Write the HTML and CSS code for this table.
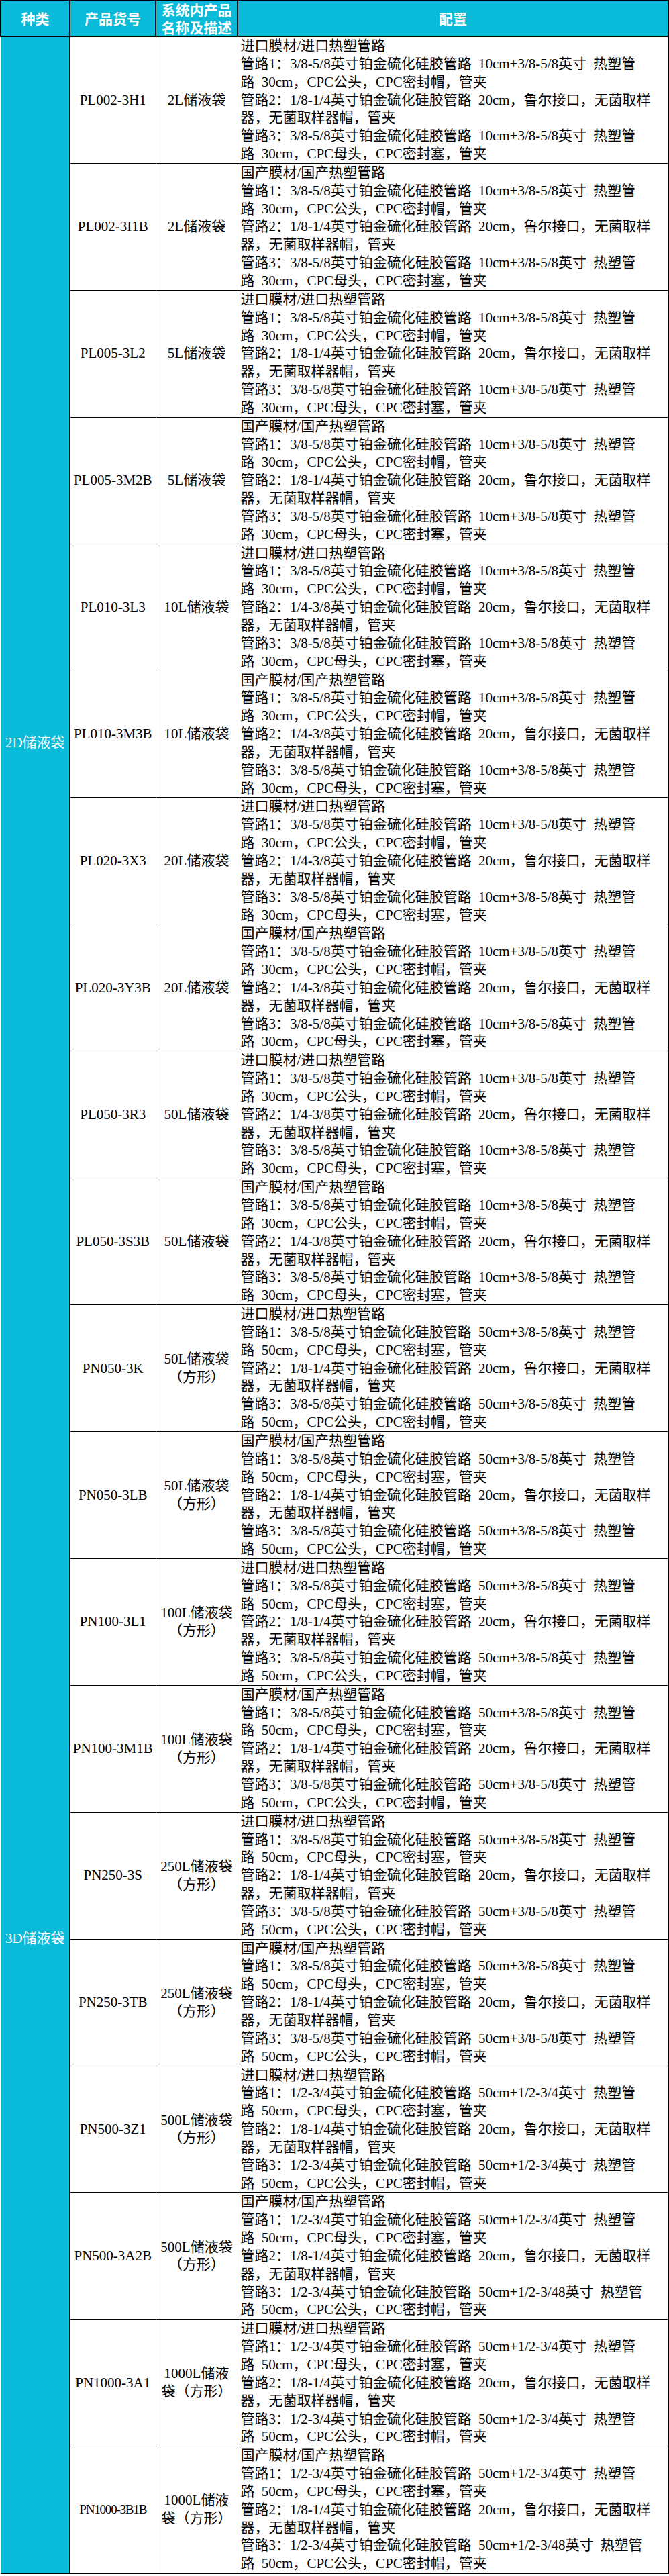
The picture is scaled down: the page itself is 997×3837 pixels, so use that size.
FILE: index.html
```html
<!DOCTYPE html>
<html lang="zh-CN">
<head>
<meta charset="utf-8">
<title>储液袋配置</title>
<link rel="stylesheet" href="styles.css">
</head>
<body>
<table class="grid">
<colgroup><col class="c1"><col class="c2"><col class="c3"><col class="c4"></colgroup>
<thead>
<tr><th>种类</th><th>产品货号</th><th>系统内产品<br>名称及描述</th><th>配置</th></tr>
</thead>
<tbody>
<tr>
<td class="cat cat-2d" rowspan="10">2D储液袋</td>
<td class="code">PL002-3H1</td><td class="name">2L储液袋</td>
<td class="cfg">进口膜材/进口热塑管路<br>管路1：3/8-5/8英寸铂金硫化硅胶管路 10cm+3/8-5/8英寸 热塑管<br>路 30cm，CPC公头，CPC密封帽，管夹<br>管路2：1/8-1/4英寸铂金硫化硅胶管路 20cm，鲁尔接口，无菌取样<br>器，无菌取样器帽，管夹<br>管路3：3/8-5/8英寸铂金硫化硅胶管路 10cm+3/8-5/8英寸 热塑管<br>路 30cm，CPC母头，CPC密封塞，管夹</td>
</tr>
<tr>
<td class="code">PL002-3I1B</td><td class="name">2L储液袋</td>
<td class="cfg">国产膜材/国产热塑管路<br>管路1：3/8-5/8英寸铂金硫化硅胶管路 10cm+3/8-5/8英寸 热塑管<br>路 30cm，CPC公头，CPC密封帽，管夹<br>管路2：1/8-1/4英寸铂金硫化硅胶管路 20cm，鲁尔接口，无菌取样<br>器，无菌取样器帽，管夹<br>管路3：3/8-5/8英寸铂金硫化硅胶管路 10cm+3/8-5/8英寸 热塑管<br>路 30cm，CPC母头，CPC密封塞，管夹</td>
</tr>
<tr>
<td class="code">PL005-3L2</td><td class="name">5L储液袋</td>
<td class="cfg">进口膜材/进口热塑管路<br>管路1：3/8-5/8英寸铂金硫化硅胶管路 10cm+3/8-5/8英寸 热塑管<br>路 30cm，CPC公头，CPC密封帽，管夹<br>管路2：1/8-1/4英寸铂金硫化硅胶管路 20cm，鲁尔接口，无菌取样<br>器，无菌取样器帽，管夹<br>管路3：3/8-5/8英寸铂金硫化硅胶管路 10cm+3/8-5/8英寸 热塑管<br>路 30cm，CPC母头，CPC密封塞，管夹</td>
</tr>
<tr>
<td class="code">PL005-3M2B</td><td class="name">5L储液袋</td>
<td class="cfg">国产膜材/国产热塑管路<br>管路1：3/8-5/8英寸铂金硫化硅胶管路 10cm+3/8-5/8英寸 热塑管<br>路 30cm，CPC公头，CPC密封帽，管夹<br>管路2：1/8-1/4英寸铂金硫化硅胶管路 20cm，鲁尔接口，无菌取样<br>器，无菌取样器帽，管夹<br>管路3：3/8-5/8英寸铂金硫化硅胶管路 10cm+3/8-5/8英寸 热塑管<br>路 30cm，CPC母头，CPC密封塞，管夹</td>
</tr>
<tr>
<td class="code">PL010-3L3</td><td class="name">10L储液袋</td>
<td class="cfg">进口膜材/进口热塑管路<br>管路1：3/8-5/8英寸铂金硫化硅胶管路 10cm+3/8-5/8英寸 热塑管<br>路 30cm，CPC公头，CPC密封帽，管夹<br>管路2：1/4-3/8英寸铂金硫化硅胶管路 20cm，鲁尔接口，无菌取样<br>器，无菌取样器帽，管夹<br>管路3：3/8-5/8英寸铂金硫化硅胶管路 10cm+3/8-5/8英寸 热塑管<br>路 30cm，CPC母头，CPC密封塞，管夹</td>
</tr>
<tr>
<td class="code">PL010-3M3B</td><td class="name">10L储液袋</td>
<td class="cfg">国产膜材/国产热塑管路<br>管路1：3/8-5/8英寸铂金硫化硅胶管路 10cm+3/8-5/8英寸 热塑管<br>路 30cm，CPC公头，CPC密封帽，管夹<br>管路2：1/4-3/8英寸铂金硫化硅胶管路 20cm，鲁尔接口，无菌取样<br>器，无菌取样器帽，管夹<br>管路3：3/8-5/8英寸铂金硫化硅胶管路 10cm+3/8-5/8英寸 热塑管<br>路 30cm，CPC母头，CPC密封塞，管夹</td>
</tr>
<tr>
<td class="code">PL020-3X3</td><td class="name">20L储液袋</td>
<td class="cfg">进口膜材/进口热塑管路<br>管路1：3/8-5/8英寸铂金硫化硅胶管路 10cm+3/8-5/8英寸 热塑管<br>路 30cm，CPC公头，CPC密封帽，管夹<br>管路2：1/4-3/8英寸铂金硫化硅胶管路 20cm，鲁尔接口，无菌取样<br>器，无菌取样器帽，管夹<br>管路3：3/8-5/8英寸铂金硫化硅胶管路 10cm+3/8-5/8英寸 热塑管<br>路 30cm，CPC母头，CPC密封塞，管夹</td>
</tr>
<tr>
<td class="code">PL020-3Y3B</td><td class="name">20L储液袋</td>
<td class="cfg">国产膜材/国产热塑管路<br>管路1：3/8-5/8英寸铂金硫化硅胶管路 10cm+3/8-5/8英寸 热塑管<br>路 30cm，CPC公头，CPC密封帽，管夹<br>管路2：1/4-3/8英寸铂金硫化硅胶管路 20cm，鲁尔接口，无菌取样<br>器，无菌取样器帽，管夹<br>管路3：3/8-5/8英寸铂金硫化硅胶管路 10cm+3/8-5/8英寸 热塑管<br>路 30cm，CPC母头，CPC密封塞，管夹</td>
</tr>
<tr>
<td class="code">PL050-3R3</td><td class="name">50L储液袋</td>
<td class="cfg">进口膜材/进口热塑管路<br>管路1：3/8-5/8英寸铂金硫化硅胶管路 10cm+3/8-5/8英寸 热塑管<br>路 30cm，CPC公头，CPC密封帽，管夹<br>管路2：1/4-3/8英寸铂金硫化硅胶管路 20cm，鲁尔接口，无菌取样<br>器，无菌取样器帽，管夹<br>管路3：3/8-5/8英寸铂金硫化硅胶管路 10cm+3/8-5/8英寸 热塑管<br>路 30cm，CPC母头，CPC密封塞，管夹</td>
</tr>
<tr>
<td class="code">PL050-3S3B</td><td class="name">50L储液袋</td>
<td class="cfg">国产膜材/国产热塑管路<br>管路1：3/8-5/8英寸铂金硫化硅胶管路 10cm+3/8-5/8英寸 热塑管<br>路 30cm，CPC公头，CPC密封帽，管夹<br>管路2：1/4-3/8英寸铂金硫化硅胶管路 20cm，鲁尔接口，无菌取样<br>器，无菌取样器帽，管夹<br>管路3：3/8-5/8英寸铂金硫化硅胶管路 10cm+3/8-5/8英寸 热塑管<br>路 30cm，CPC母头，CPC密封塞，管夹</td>
</tr>
<tr>
<td class="cat cat-3d" rowspan="10">3D储液袋</td>
<td class="code">PN050-3K</td><td class="name">50L储液袋<br>（方形）</td>
<td class="cfg">进口膜材/进口热塑管路<br>管路1：3/8-5/8英寸铂金硫化硅胶管路 50cm+3/8-5/8英寸 热塑管<br>路 50cm，CPC母头，CPC密封塞，管夹<br>管路2：1/8-1/4英寸铂金硫化硅胶管路 20cm，鲁尔接口，无菌取样<br>器，无菌取样器帽，管夹<br>管路3：3/8-5/8英寸铂金硫化硅胶管路 50cm+3/8-5/8英寸 热塑管<br>路 50cm，CPC公头，CPC密封帽，管夹</td>
</tr>
<tr>
<td class="code">PN050-3LB</td><td class="name">50L储液袋<br>（方形）</td>
<td class="cfg">国产膜材/国产热塑管路<br>管路1：3/8-5/8英寸铂金硫化硅胶管路 50cm+3/8-5/8英寸 热塑管<br>路 50cm，CPC母头，CPC密封塞，管夹<br>管路2：1/8-1/4英寸铂金硫化硅胶管路 20cm，鲁尔接口，无菌取样<br>器，无菌取样器帽，管夹<br>管路3：3/8-5/8英寸铂金硫化硅胶管路 50cm+3/8-5/8英寸 热塑管<br>路 50cm，CPC公头，CPC密封帽，管夹</td>
</tr>
<tr>
<td class="code">PN100-3L1</td><td class="name">100L储液袋<br>（方形）</td>
<td class="cfg">进口膜材/进口热塑管路<br>管路1：3/8-5/8英寸铂金硫化硅胶管路 50cm+3/8-5/8英寸 热塑管<br>路 50cm，CPC母头，CPC密封塞，管夹<br>管路2：1/8-1/4英寸铂金硫化硅胶管路 20cm，鲁尔接口，无菌取样<br>器，无菌取样器帽，管夹<br>管路3：3/8-5/8英寸铂金硫化硅胶管路 50cm+3/8-5/8英寸 热塑管<br>路 50cm，CPC公头，CPC密封帽，管夹</td>
</tr>
<tr>
<td class="code">PN100-3M1B</td><td class="name">100L储液袋<br>（方形）</td>
<td class="cfg">国产膜材/国产热塑管路<br>管路1：3/8-5/8英寸铂金硫化硅胶管路 50cm+3/8-5/8英寸 热塑管<br>路 50cm，CPC母头，CPC密封塞，管夹<br>管路2：1/8-1/4英寸铂金硫化硅胶管路 20cm，鲁尔接口，无菌取样<br>器，无菌取样器帽，管夹<br>管路3：3/8-5/8英寸铂金硫化硅胶管路 50cm+3/8-5/8英寸 热塑管<br>路 50cm，CPC公头，CPC密封帽，管夹</td>
</tr>
<tr>
<td class="code">PN250-3S</td><td class="name">250L储液袋<br>（方形）</td>
<td class="cfg">进口膜材/进口热塑管路<br>管路1：3/8-5/8英寸铂金硫化硅胶管路 50cm+3/8-5/8英寸 热塑管<br>路 50cm，CPC母头，CPC密封塞，管夹<br>管路2：1/8-1/4英寸铂金硫化硅胶管路 20cm，鲁尔接口，无菌取样<br>器，无菌取样器帽，管夹<br>管路3：3/8-5/8英寸铂金硫化硅胶管路 50cm+3/8-5/8英寸 热塑管<br>路 50cm，CPC公头，CPC密封帽，管夹</td>
</tr>
<tr>
<td class="code">PN250-3TB</td><td class="name">250L储液袋<br>（方形）</td>
<td class="cfg">国产膜材/国产热塑管路<br>管路1：3/8-5/8英寸铂金硫化硅胶管路 50cm+3/8-5/8英寸 热塑管<br>路 50cm，CPC母头，CPC密封塞，管夹<br>管路2：1/8-1/4英寸铂金硫化硅胶管路 20cm，鲁尔接口，无菌取样<br>器，无菌取样器帽，管夹<br>管路3：3/8-5/8英寸铂金硫化硅胶管路 50cm+3/8-5/8英寸 热塑管<br>路 50cm，CPC公头，CPC密封帽，管夹</td>
</tr>
<tr>
<td class="code">PN500-3Z1</td><td class="name">500L储液袋<br>（方形）</td>
<td class="cfg">进口膜材/进口热塑管路<br>管路1：1/2-3/4英寸铂金硫化硅胶管路 50cm+1/2-3/4英寸 热塑管<br>路 50cm，CPC母头，CPC密封塞，管夹<br>管路2：1/8-1/4英寸铂金硫化硅胶管路 20cm，鲁尔接口，无菌取样<br>器，无菌取样器帽，管夹<br>管路3：1/2-3/4英寸铂金硫化硅胶管路 50cm+1/2-3/4英寸 热塑管<br>路 50cm，CPC公头，CPC密封帽，管夹</td>
</tr>
<tr>
<td class="code">PN500-3A2B</td><td class="name">500L储液袋<br>（方形）</td>
<td class="cfg">国产膜材/国产热塑管路<br>管路1：1/2-3/4英寸铂金硫化硅胶管路 50cm+1/2-3/4英寸 热塑管<br>路 50cm，CPC母头，CPC密封塞，管夹<br>管路2：1/8-1/4英寸铂金硫化硅胶管路 20cm，鲁尔接口，无菌取样<br>器，无菌取样器帽，管夹<br>管路3：1/2-3/4英寸铂金硫化硅胶管路 50cm+1/2-3/48英寸 热塑管<br>路 50cm，CPC公头，CPC密封帽，管夹</td>
</tr>
<tr>
<td class="code">PN1000-3A1</td><td class="name">1000L储液<br>袋（方形）</td>
<td class="cfg">进口膜材/进口热塑管路<br>管路1：1/2-3/4英寸铂金硫化硅胶管路 50cm+1/2-3/4英寸 热塑管<br>路 50cm，CPC母头，CPC密封塞，管夹<br>管路2：1/8-1/4英寸铂金硫化硅胶管路 20cm，鲁尔接口，无菌取样<br>器，无菌取样器帽，管夹<br>管路3：1/2-3/4英寸铂金硫化硅胶管路 50cm+1/2-3/4英寸 热塑管<br>路 50cm，CPC公头，CPC密封帽，管夹</td>
</tr>
<tr>
<td class="code code-tight">PN1000-3B1B</td><td class="name">1000L储液<br>袋（方形）</td>
<td class="cfg">国产膜材/国产热塑管路<br>管路1：1/2-3/4英寸铂金硫化硅胶管路 50cm+1/2-3/4英寸 热塑管<br>路 50cm，CPC母头，CPC密封塞，管夹<br>管路2：1/8-1/4英寸铂金硫化硅胶管路 20cm，鲁尔接口，无菌取样<br>器，无菌取样器帽，管夹<br>管路3：1/2-3/4英寸铂金硫化硅胶管路 50cm+1/2-3/48英寸 热塑管<br>路 50cm，CPC公头，CPC密封帽，管夹</td>
</tr>
</tbody>
</table>
</body>
</html>
```

FILE: styles.css
```css
html, body {
  margin: 0;
  padding: 0;
  background: #ffffff;
}

.grid {
  width: 997px;
  border-collapse: collapse;
  table-layout: fixed;
  font-family: "Liberation Serif", "Noto Sans CJK SC", serif;
  font-size: 21px;
  color: #000000;
  border-top: 1px solid #000;
  border-left: 1px solid #000;
  border-right: 2px solid #000;
  border-bottom: 2px solid #000;
}

.c1 { width: 103px; }
.c2 { width: 128px; }
.c3 { width: 122px; }
.c4 { width: auto; }

.grid th {
  background: #0abbd9;
  color: #ffffff;
  font-weight: bold;
  font-family: "Noto Sans CJK SC", sans-serif;
  font-size: 21px;
  line-height: 26px;
  height: 52px;
  padding: 0;
  text-align: center;
  vertical-align: middle;
  border: 2px solid #000;
  border-top: 1px solid #000;
}

.grid td {
  border: 1px solid #000;
  padding: 0;
  line-height: 26.85px;
  vertical-align: middle;
}

.cat {
  background: #0abbd9;
  color: #ffffff;
  text-align: center;
  border-top: none !important;
  border-bottom: none !important;
  border-right: 2px solid #000 !important;
}

.cat-2d {
  padding-top: 214px !important;
}

.code,
.name {
  text-align: center;
  white-space: nowrap;
}

.code-tight {
  letter-spacing: -1.2px;
  font-size: 19px;
}

.cfg {
  text-align: left;
  vertical-align: top;
  padding: 0 0 0 4px !important;
  white-space: nowrap;
  word-spacing: 5px;
}
```
